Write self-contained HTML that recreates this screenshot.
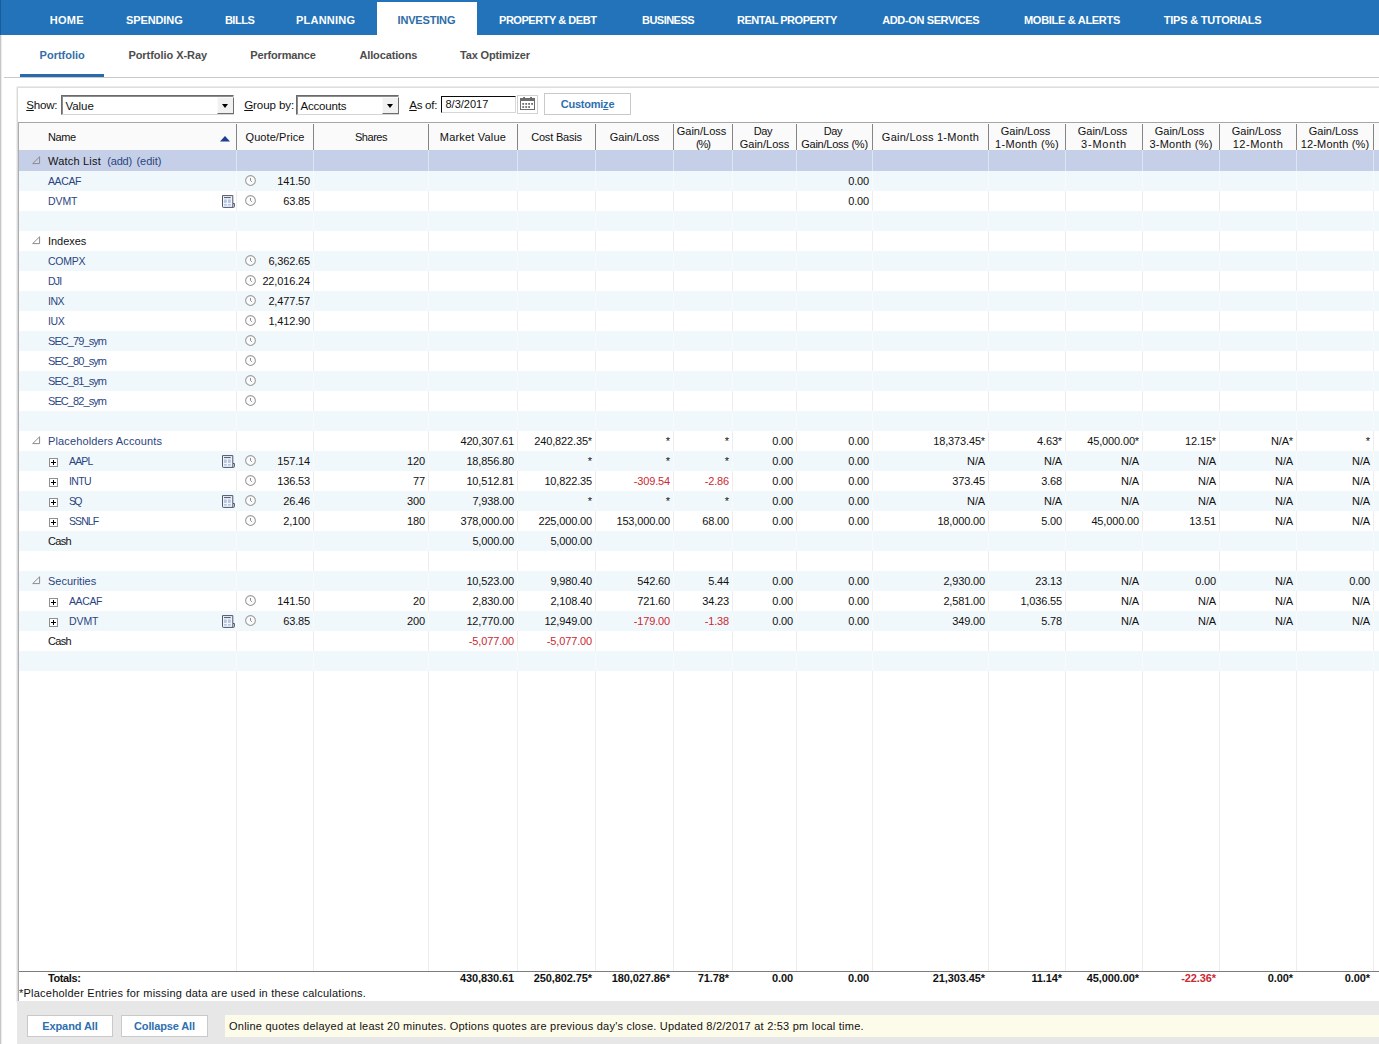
<!DOCTYPE html><html><head><meta charset="utf-8"><title>Portfolio</title><style>
*{box-sizing:border-box;margin:0;padding:0}
html,body{width:1379px;height:1044px;overflow:hidden;background:#fff}
body{position:relative;font-family:"Liberation Sans",sans-serif;font-size:11px;color:#111;letter-spacing:.2px}
.abs{position:absolute}
.nw{white-space:nowrap}
#nav{position:absolute;left:0;top:0;width:1379px;height:35px;background:#2273ba}
#nav .it{position:absolute;top:0;height:35px;line-height:41px;font-weight:bold;font-size:11px;color:#fff;white-space:nowrap;letter-spacing:0}
#nav .act{position:absolute;left:377px;top:2px;width:100px;height:33px;background:#fff}
#ledge{position:absolute;left:0;top:35px;width:2px;height:1009px;background:linear-gradient(90deg,#c6c6c6 50%,#ececec 50%)}
#ledge2{position:absolute;left:0;top:0;width:1px;height:35px;background:#1b5c9c}
.sub{position:absolute;top:47px;height:16px;line-height:16px;font-weight:bold;font-size:11px;color:#4d4d4d;white-space:nowrap;letter-spacing:0}
.sub.on{color:#356ea8}
#uline{position:absolute;left:20px;top:74px;width:84px;height:3px;background:#276aae}
#hline{position:absolute;left:4px;top:77px;width:1375px;height:1px;background:#c9c9c9}
#panel{position:absolute;left:17px;top:87px;width:1362px;height:915px;background:#fff;border-left:1px solid #d9d9d9;border-top:1px solid #dedede;border-bottom:1px solid #cfcfcf;box-shadow:0 -1px 0 #ebebeb,-1px 0 0 #efefef}
#foot{position:absolute;left:17px;top:1001px;width:1362px;height:43px;background:#e7e7e7}
.lbl{position:absolute;top:97.3px;height:16px;line-height:16px;font-size:11.6px;white-space:nowrap;letter-spacing:0;color:#111}
.lbl u{text-decoration:underline}
.sel{position:absolute;top:95px;height:20px;background:#fff;border:1px solid;border-color:#6a6a6a #d4d4d4 #d4d4d4 #6a6a6a;box-shadow:inset 1px 1px 0 #8c8c8c}
.sel .tx{position:absolute;left:3.5px;top:2px;line-height:16px;font-size:11.5px;letter-spacing:0;white-space:nowrap}
.sel .bt{position:absolute;right:-1px;top:1px;width:17px;height:17px;background:#f1f1f1;border:1px solid;border-color:#fafafa #6e6e6e #6e6e6e #fafafa}
.sel .bt:after{content:"";position:absolute;left:4px;top:6px;border:3.5px solid transparent;border-top:4px solid #000;border-bottom:0}
#date{position:absolute;left:441px;top:96px;width:75px;height:17px;background:#fff;border:1px solid;border-color:#0a0a0a #d6d6d6 #d6d6d6 #0a0a0a}
#date span{position:absolute;left:3.5px;top:0;line-height:14px;font-size:11px;letter-spacing:0}
#cal{position:absolute;left:517px;top:95px;width:21px;height:19px;background:#fff;border:1px solid #d2d2d2}
.btn{position:absolute;background:#fff;border:1px solid #c9c9c9;color:#2e6fb0;font-weight:bold;font-size:11px;text-align:center;white-space:nowrap;letter-spacing:0}
#hdr{position:absolute;left:18px;top:122px;width:1361px;height:29px;background:#fafafa;border-top:1px solid #a6a6a6}
.hs{position:absolute;top:124px;width:1px;height:26px;background:#858585}
.hc{position:absolute;top:124px;height:26px;display:flex;align-items:center;justify-content:center;text-align:center;line-height:13px;font-size:11px;color:#111;white-space:nowrap}
.row{position:absolute;left:19px;width:1360px;height:20px;--g:#ededed;background-color:#fff;background-repeat:no-repeat;background-size:1px 100%;background-image:linear-gradient(var(--g),var(--g)),linear-gradient(var(--g),var(--g)),linear-gradient(var(--g),var(--g)),linear-gradient(var(--g),var(--g)),linear-gradient(var(--g),var(--g)),linear-gradient(var(--g),var(--g)),linear-gradient(var(--g),var(--g)),linear-gradient(var(--g),var(--g)),linear-gradient(var(--g),var(--g)),linear-gradient(var(--g),var(--g)),linear-gradient(var(--g),var(--g)),linear-gradient(var(--g),var(--g)),linear-gradient(var(--g),var(--g)),linear-gradient(var(--g),var(--g)),linear-gradient(var(--g),var(--g));background-position:217px 0,294px 0,409px 0,498px 0,576px 0,654px 0,713px 0,777px 0,853px 0,969px 0,1046px 0,1123px 0,1200px 0,1277px 0,1354px 0}
.row.b{background-color:#f1f8fc;--g:#f8fbfd}
.row.s{background-color:#c5d0e8;--g:#dde4f3}
#rest{top:671px;height:300px}
.c{position:absolute;height:20px;line-height:20px;white-space:nowrap;font-size:11px}
.n{letter-spacing:-.15px;text-align:right}
.lk{color:#2b457f}
.red{color:#cb2932}
.bd{font-weight:bold;letter-spacing:-.1px}
#lbord{position:absolute;left:18px;top:122px;width:1px;height:879px;background:#adadad}
#tline{position:absolute;left:18px;top:971px;width:1361px;height:1px;background:#7d7d7d}
#info{position:absolute;left:225px;top:1015px;width:1154px;height:22px;background:#fdfbe9;line-height:22px;padding-left:4px;font-size:11px;white-space:nowrap}
svg{position:absolute;overflow:visible}
</style></head><body>
<div id="nav"><div class="act"></div>
<div class="it" style="left:49.7px;letter-spacing:0.275px">HOME</div>
<div class="it" style="left:125.9px;letter-spacing:-0.084px">SPENDING</div>
<div class="it" style="left:224.9px;letter-spacing:-0.476px">BILLS</div>
<div class="it" style="left:296.0px;letter-spacing:0.231px">PLANNING</div>
<div class="it" style="left:397.5px;letter-spacing:-0.166px;color:#2e6da4">INVESTING</div>
<div class="it" style="left:499.0px;letter-spacing:-0.461px">PROPERTY &amp; DEBT</div>
<div class="it" style="left:642.0px;letter-spacing:-0.531px">BUSINESS</div>
<div class="it" style="left:737.0px;letter-spacing:-0.485px">RENTAL PROPERTY</div>
<div class="it" style="left:882.2px;letter-spacing:-0.366px">ADD-ON SERVICES</div>
<div class="it" style="left:1024.0px;letter-spacing:-0.296px">MOBILE &amp; ALERTS</div>
<div class="it" style="left:1163.8px;letter-spacing:-0.234px">TIPS &amp; TUTORIALS</div>
</div>
<div id="ledge"></div><div id="ledge2"></div>
<div class="sub on" style="left:39.6px;letter-spacing:-0.002px">Portfolio</div>
<div class="sub" style="left:128.4px;letter-spacing:-0.050px">Portfolio X-Ray</div>
<div class="sub" style="left:250.3px;letter-spacing:-0.170px">Performance</div>
<div class="sub" style="left:359.4px;letter-spacing:-0.127px">Allocations</div>
<div class="sub" style="left:459.9px;letter-spacing:-0.141px">Tax Optimizer</div>
<div id="uline"></div><div id="hline"></div>
<div id="panel"></div><div id="foot"></div>
<div class="lbl" style="left:26.3px;letter-spacing:-0.247px"><u>S</u>how:</div>
<div class="sel" style="left:61px;width:173px"><span class="tx"><span style="letter-spacing:-0.066px">Value</span></span><span class="bt"></span></div>
<div class="lbl" style="left:244.2px;letter-spacing:-0.104px"><u>G</u>roup by:</div>
<div class="sel" style="left:296px;width:103px"><span class="tx"><span style="letter-spacing:-0.188px">Accounts</span></span><span class="bt"></span></div>
<div class="lbl" style="left:409.2px;letter-spacing:-0.276px"><u>A</u>s of:</div>
<div id="date"><span>8/3/2017</span></div>
<div id="cal"><svg width="15" height="13" style="left:2px;top:1px" viewBox="0 0 15 13"><rect x="0.5" y="1.5" width="14" height="11" fill="#fff" stroke="#6c6c6c"/><rect x="0" y="1" width="15" height="3" fill="#6c6c6c"/><g fill="#6c6c6c"><rect x="3.1" y="0" width="1.9" height="1.3"/><rect x="10.1" y="0" width="1.9" height="1.3"/><rect x="2.3" y="6" width="1.8" height="1.8"/><rect x="5.3" y="6" width="1.8" height="1.8"/><rect x="8.2" y="6" width="1.8" height="1.8"/><rect x="11.2" y="6" width="1.8" height="1.8"/><rect x="2.3" y="9.1" width="1.8" height="1.8"/><rect x="5.3" y="9.1" width="1.8" height="1.8"/><rect x="8.2" y="9.1" width="1.8" height="1.8"/></g></svg></div>
<div class="btn" style="left:544px;top:93px;width:87px;height:22px;line-height:20px"><span style="letter-spacing:-0.228px">Customi<u>z</u>e</span></div>
<div id="hdr"></div>
<div class="hs" style="left:236px"></div>
<div class="hs" style="left:313px"></div>
<div class="hs" style="left:428px"></div>
<div class="hs" style="left:517px"></div>
<div class="hs" style="left:595px"></div>
<div class="hs" style="left:673px"></div>
<div class="hs" style="left:732px"></div>
<div class="hs" style="left:796px"></div>
<div class="hs" style="left:872px"></div>
<div class="hs" style="left:988px"></div>
<div class="hs" style="left:1065px"></div>
<div class="hs" style="left:1142px"></div>
<div class="hs" style="left:1219px"></div>
<div class="hs" style="left:1296px"></div>
<div class="hs" style="left:1373px"></div>
<div class="hc" style="left:48px;justify-content:flex-start"><div><span style="letter-spacing:-0.381px">Name</span></div></div>
<div class="hc" style="left:237px;width:76px"><div><span style="letter-spacing:0.081px">Quote/Price</span></div></div>
<div class="hc" style="left:314px;width:114px"><div><span style="letter-spacing:-0.472px">Shares</span></div></div>
<div class="hc" style="left:429px;width:88px"><div><span style="letter-spacing:0.191px">Market Value</span></div></div>
<div class="hc" style="left:518px;width:77px"><div><span style="letter-spacing:-0.186px">Cost Basis</span></div></div>
<div class="hc" style="left:596px;width:77px"><div><span style="letter-spacing:-0.004px">Gain/Loss</span></div></div>
<div class="hc" style="left:674px;width:58px"><div><div style="position:relative;top:.8px"><span style="padding-right:3px"><span style="letter-spacing:-0.004px">Gain/Loss</span></span><br><span style="letter-spacing:-1.055px">(%)</span></div></div></div>
<div class="hc" style="left:733px;width:63px"><div><div style="position:relative;top:.8px"><span style="padding-right:3px"><span style="letter-spacing:-0.381px">Day</span></span><br><span style="letter-spacing:-0.004px">Gain/Loss</span></div></div></div>
<div class="hc" style="left:797px;width:75px"><div><div style="position:relative;top:.8px"><span style="padding-right:3px"><span style="letter-spacing:-0.381px">Day</span></span><br><span style="letter-spacing:-0.234px">Gain/Loss (%)</span></div></div></div>
<div class="hc" style="left:873px;width:115px"><div><span style="letter-spacing:0.260px">Gain/Loss 1-Month</span></div></div>
<div class="hc" style="left:989px;width:76px"><div><div style="position:relative;top:.8px"><span style="padding-right:3px"><span style="letter-spacing:-0.004px">Gain/Loss</span></span><br><span style="letter-spacing:0.307px">1-Month (%)</span></div></div></div>
<div class="hc" style="left:1066px;width:76px"><div><div style="position:relative;top:.8px"><span style="padding-right:3px"><span style="letter-spacing:-0.004px">Gain/Loss</span></span><br><span style="letter-spacing:0.807px">3-Month</span></div></div></div>
<div class="hc" style="left:1143px;width:76px"><div><div style="position:relative;top:.8px"><span style="padding-right:3px"><span style="letter-spacing:-0.004px">Gain/Loss</span></span><br><span style="letter-spacing:0.237px">3-Month (%)</span></div></div></div>
<div class="hc" style="left:1220px;width:76px"><div><div style="position:relative;top:.8px"><span style="padding-right:3px"><span style="letter-spacing:-0.004px">Gain/Loss</span></span><br><span style="letter-spacing:0.517px">12-Month</span></div></div></div>
<div class="hc" style="left:1297px;width:76px"><div><div style="position:relative;top:.8px"><span style="padding-right:3px"><span style="letter-spacing:-0.004px">Gain/Loss</span></span><br><span style="letter-spacing:0.169px">12-Month (%)</span></div></div></div>
<svg width="10" height="6" style="left:220px;top:136px" viewBox="0 0 10 6"><path d="M0 5.5 L5 0 L10 5.5Z" fill="#1c3f94"/></svg>
<div class="row s" style="top:150px;height:21px"></div>
<div class="row b" style="top:171px"></div>
<div class="row " style="top:191px"></div>
<div class="row b" style="top:211px"></div>
<div class="row " style="top:231px"></div>
<div class="row b" style="top:251px"></div>
<div class="row " style="top:271px"></div>
<div class="row b" style="top:291px"></div>
<div class="row " style="top:311px"></div>
<div class="row b" style="top:331px"></div>
<div class="row " style="top:351px"></div>
<div class="row b" style="top:371px"></div>
<div class="row " style="top:391px"></div>
<div class="row b" style="top:411px"></div>
<div class="row " style="top:431px"></div>
<div class="row b" style="top:451px"></div>
<div class="row " style="top:471px"></div>
<div class="row b" style="top:491px"></div>
<div class="row " style="top:511px"></div>
<div class="row b" style="top:531px"></div>
<div class="row " style="top:551px"></div>
<div class="row b" style="top:571px"></div>
<div class="row " style="top:591px"></div>
<div class="row b" style="top:611px"></div>
<div class="row " style="top:631px"></div>
<div class="row b" style="top:651px"></div>
<div class="row" id="rest"></div>
<svg width="9" height="9" style="left:32px;top:156px" viewBox="0 0 9 9"><path d="M0.7 7.6 H7.6 V0.8 Z" fill="none" stroke="#8a8a8a" stroke-width="1"/></svg>
<div class="c" style="left:48px;top:151px"><span style="letter-spacing:0.194px">Watch List</span></div><div class="c lk" style="left:107.3px;top:151px"><span style="letter-spacing:-0.222px">(add)</span></div><div class="c lk" style="left:136.4px;top:151px"><span style="letter-spacing:-0.013px">(edit)</span></div>
<div class="c lk" style="left:48px;top:171px"><span style="font-size:10.5px;letter-spacing:-0.404px">AACAF</span></div>
<svg width="11" height="11" style="left:245px;top:175px" viewBox="0 0 11 11"><circle cx="5.5" cy="5.5" r="4.9" fill="#fafafa" fill-opacity=".8" stroke="#9c9c9c" stroke-width="1.05"/><path d="M5.5 3V5.5L6.9 6.8" fill="none" stroke="#7d7d7d" stroke-width="0.9"/></svg>
<div class="c n" style="left:237px;width:73px;top:171px">141.50</div>
<div class="c n" style="left:797px;width:72px;top:171px">0.00</div>
<div class="c lk" style="left:48px;top:191px"><span style="font-size:10.5px;letter-spacing:-0.083px">DVMT</span></div>
<svg width="13" height="13" style="left:222px;top:195px" viewBox="0 0 13 13"><path d="M0.5 0.6H10.8V8.5H12.4V11.6Q12.4 12.4 11.6 12.4H1.3Q0.5 12.4 0.5 11.6Z" fill="#f1f5fb" stroke="#4d556b" stroke-width="1"/><path d="M10.8 8.5V12" stroke="#4d556b" stroke-width="1"/><path d="M2 2.6H8.8" stroke="#4d556b" stroke-width="1"/><rect x="2" y="4.4" width="2.8" height="3.5" fill="#b4c4e3"/><rect x="6" y="4.4" width="2.8" height="3.5" fill="#b4c4e3"/><rect x="2" y="9" width="2.8" height="1.6" fill="#b4c4e3"/><rect x="6" y="9" width="2.8" height="1.6" fill="#b4c4e3"/></svg>
<svg width="11" height="11" style="left:245px;top:195px" viewBox="0 0 11 11"><circle cx="5.5" cy="5.5" r="4.9" fill="#fafafa" fill-opacity=".8" stroke="#9c9c9c" stroke-width="1.05"/><path d="M5.5 3V5.5L6.9 6.8" fill="none" stroke="#7d7d7d" stroke-width="0.9"/></svg>
<div class="c n" style="left:237px;width:73px;top:191px">63.85</div>
<div class="c n" style="left:797px;width:72px;top:191px">0.00</div>
<svg width="9" height="9" style="left:32px;top:236px" viewBox="0 0 9 9"><path d="M0.7 7.6 H7.6 V0.8 Z" fill="none" stroke="#8a8a8a" stroke-width="1"/></svg>
<div class="c" style="left:48px;top:231px"><span style="letter-spacing:-0.055px">Indexes</span></div>
<div class="c lk" style="left:48px;top:251px"><span style="font-size:10.5px;letter-spacing:-0.254px">COMPX</span></div>
<svg width="11" height="11" style="left:245px;top:255px" viewBox="0 0 11 11"><circle cx="5.5" cy="5.5" r="4.9" fill="#fafafa" fill-opacity=".8" stroke="#9c9c9c" stroke-width="1.05"/><path d="M5.5 3V5.5L6.9 6.8" fill="none" stroke="#7d7d7d" stroke-width="0.9"/></svg>
<div class="c n" style="left:237px;width:73px;top:251px">6,362.65</div>
<div class="c lk" style="left:48px;top:271px"><span style="font-size:10.5px;letter-spacing:-0.775px">DJI</span></div>
<svg width="11" height="11" style="left:245px;top:275px" viewBox="0 0 11 11"><circle cx="5.5" cy="5.5" r="4.9" fill="#fafafa" fill-opacity=".8" stroke="#9c9c9c" stroke-width="1.05"/><path d="M5.5 3V5.5L6.9 6.8" fill="none" stroke="#7d7d7d" stroke-width="0.9"/></svg>
<div class="c n" style="left:237px;width:73px;top:271px">22,016.24</div>
<div class="c lk" style="left:48px;top:291px"><span style="font-size:10.5px;letter-spacing:-0.508px">INX</span></div>
<svg width="11" height="11" style="left:245px;top:295px" viewBox="0 0 11 11"><circle cx="5.5" cy="5.5" r="4.9" fill="#fafafa" fill-opacity=".8" stroke="#9c9c9c" stroke-width="1.05"/><path d="M5.5 3V5.5L6.9 6.8" fill="none" stroke="#7d7d7d" stroke-width="0.9"/></svg>
<div class="c n" style="left:237px;width:73px;top:291px">2,477.57</div>
<div class="c lk" style="left:48px;top:311px"><span style="font-size:10.5px;letter-spacing:-0.408px">IUX</span></div>
<svg width="11" height="11" style="left:245px;top:315px" viewBox="0 0 11 11"><circle cx="5.5" cy="5.5" r="4.9" fill="#fafafa" fill-opacity=".8" stroke="#9c9c9c" stroke-width="1.05"/><path d="M5.5 3V5.5L6.9 6.8" fill="none" stroke="#7d7d7d" stroke-width="0.9"/></svg>
<div class="c n" style="left:237px;width:73px;top:311px">1,412.90</div>
<div class="c lk" style="left:48px;top:331px"><span style="letter-spacing:-0.918px">SEC_79_sym</span></div>
<svg width="11" height="11" style="left:245px;top:335px" viewBox="0 0 11 11"><circle cx="5.5" cy="5.5" r="4.9" fill="#fafafa" fill-opacity=".8" stroke="#9c9c9c" stroke-width="1.05"/><path d="M5.5 3V5.5L6.9 6.8" fill="none" stroke="#7d7d7d" stroke-width="0.9"/></svg>
<div class="c lk" style="left:48px;top:351px"><span style="letter-spacing:-0.918px">SEC_80_sym</span></div>
<svg width="11" height="11" style="left:245px;top:355px" viewBox="0 0 11 11"><circle cx="5.5" cy="5.5" r="4.9" fill="#fafafa" fill-opacity=".8" stroke="#9c9c9c" stroke-width="1.05"/><path d="M5.5 3V5.5L6.9 6.8" fill="none" stroke="#7d7d7d" stroke-width="0.9"/></svg>
<div class="c lk" style="left:48px;top:371px"><span style="letter-spacing:-0.918px">SEC_81_sym</span></div>
<svg width="11" height="11" style="left:245px;top:375px" viewBox="0 0 11 11"><circle cx="5.5" cy="5.5" r="4.9" fill="#fafafa" fill-opacity=".8" stroke="#9c9c9c" stroke-width="1.05"/><path d="M5.5 3V5.5L6.9 6.8" fill="none" stroke="#7d7d7d" stroke-width="0.9"/></svg>
<div class="c lk" style="left:48px;top:391px"><span style="letter-spacing:-0.918px">SEC_82_sym</span></div>
<svg width="11" height="11" style="left:245px;top:395px" viewBox="0 0 11 11"><circle cx="5.5" cy="5.5" r="4.9" fill="#fafafa" fill-opacity=".8" stroke="#9c9c9c" stroke-width="1.05"/><path d="M5.5 3V5.5L6.9 6.8" fill="none" stroke="#7d7d7d" stroke-width="0.9"/></svg>
<svg width="9" height="9" style="left:32px;top:436px" viewBox="0 0 9 9"><path d="M0.7 7.6 H7.6 V0.8 Z" fill="none" stroke="#8a8a8a" stroke-width="1"/></svg>
<div class="c lk" style="left:48px;top:431px"><span style="letter-spacing:0.135px">Placeholders Accounts</span></div>
<div class="c n" style="left:429px;width:85px;top:431px">420,307.61</div>
<div class="c n" style="left:518px;width:74px;top:431px">240,822.35*</div>
<div class="c n" style="left:596px;width:74px;top:431px">*</div>
<div class="c n" style="left:674px;width:55px;top:431px">*</div>
<div class="c n" style="left:733px;width:60px;top:431px">0.00</div>
<div class="c n" style="left:797px;width:72px;top:431px">0.00</div>
<div class="c n" style="left:873px;width:112px;top:431px">18,373.45*</div>
<div class="c n" style="left:989px;width:73px;top:431px">4.63*</div>
<div class="c n" style="left:1066px;width:73px;top:431px">45,000.00*</div>
<div class="c n" style="left:1143px;width:73px;top:431px">12.15*</div>
<div class="c n" style="left:1220px;width:73px;top:431px">N/A*</div>
<div class="c n" style="left:1297px;width:73px;top:431px">*</div>
<svg width="9" height="9" style="left:49px;top:458px" viewBox="0 0 9 9"><rect x="0.5" y="0.5" width="8" height="8" fill="#fff" stroke="#8e8e8e"/><path d="M2 4.5H7M4.5 2V7" stroke="#000" stroke-width="1"/></svg>
<div class="c lk" style="left:69px;top:451px"><span style="font-size:10.5px;letter-spacing:-0.820px">AAPL</span></div>
<svg width="13" height="13" style="left:222px;top:455px" viewBox="0 0 13 13"><path d="M0.5 0.6H10.8V8.5H12.4V11.6Q12.4 12.4 11.6 12.4H1.3Q0.5 12.4 0.5 11.6Z" fill="#f1f5fb" stroke="#4d556b" stroke-width="1"/><path d="M10.8 8.5V12" stroke="#4d556b" stroke-width="1"/><path d="M2 2.6H8.8" stroke="#4d556b" stroke-width="1"/><rect x="2" y="4.4" width="2.8" height="3.5" fill="#b4c4e3"/><rect x="6" y="4.4" width="2.8" height="3.5" fill="#b4c4e3"/><rect x="2" y="9" width="2.8" height="1.6" fill="#b4c4e3"/><rect x="6" y="9" width="2.8" height="1.6" fill="#b4c4e3"/></svg>
<svg width="11" height="11" style="left:245px;top:455px" viewBox="0 0 11 11"><circle cx="5.5" cy="5.5" r="4.9" fill="#fafafa" fill-opacity=".8" stroke="#9c9c9c" stroke-width="1.05"/><path d="M5.5 3V5.5L6.9 6.8" fill="none" stroke="#7d7d7d" stroke-width="0.9"/></svg>
<div class="c n" style="left:237px;width:73px;top:451px">157.14</div>
<div class="c n" style="left:314px;width:111px;top:451px">120</div>
<div class="c n" style="left:429px;width:85px;top:451px">18,856.80</div>
<div class="c n" style="left:518px;width:74px;top:451px">*</div>
<div class="c n" style="left:596px;width:74px;top:451px">*</div>
<div class="c n" style="left:674px;width:55px;top:451px">*</div>
<div class="c n" style="left:733px;width:60px;top:451px">0.00</div>
<div class="c n" style="left:797px;width:72px;top:451px">0.00</div>
<div class="c n" style="left:873px;width:112px;top:451px">N/A</div>
<div class="c n" style="left:989px;width:73px;top:451px">N/A</div>
<div class="c n" style="left:1066px;width:73px;top:451px">N/A</div>
<div class="c n" style="left:1143px;width:73px;top:451px">N/A</div>
<div class="c n" style="left:1220px;width:73px;top:451px">N/A</div>
<div class="c n" style="left:1297px;width:73px;top:451px">N/A</div>
<svg width="9" height="9" style="left:49px;top:478px" viewBox="0 0 9 9"><rect x="0.5" y="0.5" width="8" height="8" fill="#fff" stroke="#8e8e8e"/><path d="M2 4.5H7M4.5 2V7" stroke="#000" stroke-width="1"/></svg>
<div class="c lk" style="left:69px;top:471px"><span style="font-size:10.5px;letter-spacing:-0.633px">INTU</span></div>
<svg width="11" height="11" style="left:245px;top:475px" viewBox="0 0 11 11"><circle cx="5.5" cy="5.5" r="4.9" fill="#fafafa" fill-opacity=".8" stroke="#9c9c9c" stroke-width="1.05"/><path d="M5.5 3V5.5L6.9 6.8" fill="none" stroke="#7d7d7d" stroke-width="0.9"/></svg>
<div class="c n" style="left:237px;width:73px;top:471px">136.53</div>
<div class="c n" style="left:314px;width:111px;top:471px">77</div>
<div class="c n" style="left:429px;width:85px;top:471px">10,512.81</div>
<div class="c n" style="left:518px;width:74px;top:471px">10,822.35</div>
<div class="c n red" style="left:596px;width:74px;top:471px">-309.54</div>
<div class="c n red" style="left:674px;width:55px;top:471px">-2.86</div>
<div class="c n" style="left:733px;width:60px;top:471px">0.00</div>
<div class="c n" style="left:797px;width:72px;top:471px">0.00</div>
<div class="c n" style="left:873px;width:112px;top:471px">373.45</div>
<div class="c n" style="left:989px;width:73px;top:471px">3.68</div>
<div class="c n" style="left:1066px;width:73px;top:471px">N/A</div>
<div class="c n" style="left:1143px;width:73px;top:471px">N/A</div>
<div class="c n" style="left:1220px;width:73px;top:471px">N/A</div>
<div class="c n" style="left:1297px;width:73px;top:471px">N/A</div>
<svg width="9" height="9" style="left:49px;top:498px" viewBox="0 0 9 9"><rect x="0.5" y="0.5" width="8" height="8" fill="#fff" stroke="#8e8e8e"/><path d="M2 4.5H7M4.5 2V7" stroke="#000" stroke-width="1"/></svg>
<div class="c lk" style="left:69px;top:491px"><span style="font-size:10.5px;letter-spacing:-1.672px">SQ</span></div>
<svg width="13" height="13" style="left:222px;top:495px" viewBox="0 0 13 13"><path d="M0.5 0.6H10.8V8.5H12.4V11.6Q12.4 12.4 11.6 12.4H1.3Q0.5 12.4 0.5 11.6Z" fill="#f1f5fb" stroke="#4d556b" stroke-width="1"/><path d="M10.8 8.5V12" stroke="#4d556b" stroke-width="1"/><path d="M2 2.6H8.8" stroke="#4d556b" stroke-width="1"/><rect x="2" y="4.4" width="2.8" height="3.5" fill="#b4c4e3"/><rect x="6" y="4.4" width="2.8" height="3.5" fill="#b4c4e3"/><rect x="2" y="9" width="2.8" height="1.6" fill="#b4c4e3"/><rect x="6" y="9" width="2.8" height="1.6" fill="#b4c4e3"/></svg>
<svg width="11" height="11" style="left:245px;top:495px" viewBox="0 0 11 11"><circle cx="5.5" cy="5.5" r="4.9" fill="#fafafa" fill-opacity=".8" stroke="#9c9c9c" stroke-width="1.05"/><path d="M5.5 3V5.5L6.9 6.8" fill="none" stroke="#7d7d7d" stroke-width="0.9"/></svg>
<div class="c n" style="left:237px;width:73px;top:491px">26.46</div>
<div class="c n" style="left:314px;width:111px;top:491px">300</div>
<div class="c n" style="left:429px;width:85px;top:491px">7,938.00</div>
<div class="c n" style="left:518px;width:74px;top:491px">*</div>
<div class="c n" style="left:596px;width:74px;top:491px">*</div>
<div class="c n" style="left:674px;width:55px;top:491px">*</div>
<div class="c n" style="left:733px;width:60px;top:491px">0.00</div>
<div class="c n" style="left:797px;width:72px;top:491px">0.00</div>
<div class="c n" style="left:873px;width:112px;top:491px">N/A</div>
<div class="c n" style="left:989px;width:73px;top:491px">N/A</div>
<div class="c n" style="left:1066px;width:73px;top:491px">N/A</div>
<div class="c n" style="left:1143px;width:73px;top:491px">N/A</div>
<div class="c n" style="left:1220px;width:73px;top:491px">N/A</div>
<div class="c n" style="left:1297px;width:73px;top:491px">N/A</div>
<svg width="9" height="9" style="left:49px;top:518px" viewBox="0 0 9 9"><rect x="0.5" y="0.5" width="8" height="8" fill="#fff" stroke="#8e8e8e"/><path d="M2 4.5H7M4.5 2V7" stroke="#000" stroke-width="1"/></svg>
<div class="c lk" style="left:69px;top:511px"><span style="font-size:10.5px;letter-spacing:-0.911px">SSNLF</span></div>
<svg width="11" height="11" style="left:245px;top:515px" viewBox="0 0 11 11"><circle cx="5.5" cy="5.5" r="4.9" fill="#fafafa" fill-opacity=".8" stroke="#9c9c9c" stroke-width="1.05"/><path d="M5.5 3V5.5L6.9 6.8" fill="none" stroke="#7d7d7d" stroke-width="0.9"/></svg>
<div class="c n" style="left:237px;width:73px;top:511px">2,100</div>
<div class="c n" style="left:314px;width:111px;top:511px">180</div>
<div class="c n" style="left:429px;width:85px;top:511px">378,000.00</div>
<div class="c n" style="left:518px;width:74px;top:511px">225,000.00</div>
<div class="c n" style="left:596px;width:74px;top:511px">153,000.00</div>
<div class="c n" style="left:674px;width:55px;top:511px">68.00</div>
<div class="c n" style="left:733px;width:60px;top:511px">0.00</div>
<div class="c n" style="left:797px;width:72px;top:511px">0.00</div>
<div class="c n" style="left:873px;width:112px;top:511px">18,000.00</div>
<div class="c n" style="left:989px;width:73px;top:511px">5.00</div>
<div class="c n" style="left:1066px;width:73px;top:511px">45,000.00</div>
<div class="c n" style="left:1143px;width:73px;top:511px">13.51</div>
<div class="c n" style="left:1220px;width:73px;top:511px">N/A</div>
<div class="c n" style="left:1297px;width:73px;top:511px">N/A</div>
<div class="c" style="left:48px;top:531px"><span style="letter-spacing:-0.663px">Cash</span></div>
<div class="c n" style="left:429px;width:85px;top:531px">5,000.00</div>
<div class="c n" style="left:518px;width:74px;top:531px">5,000.00</div>
<svg width="9" height="9" style="left:32px;top:576px" viewBox="0 0 9 9"><path d="M0.7 7.6 H7.6 V0.8 Z" fill="none" stroke="#8a8a8a" stroke-width="1"/></svg>
<div class="c lk" style="left:48px;top:571px"><span style="letter-spacing:-0.011px">Securities</span></div>
<div class="c n" style="left:429px;width:85px;top:571px">10,523.00</div>
<div class="c n" style="left:518px;width:74px;top:571px">9,980.40</div>
<div class="c n" style="left:596px;width:74px;top:571px">542.60</div>
<div class="c n" style="left:674px;width:55px;top:571px">5.44</div>
<div class="c n" style="left:733px;width:60px;top:571px">0.00</div>
<div class="c n" style="left:797px;width:72px;top:571px">0.00</div>
<div class="c n" style="left:873px;width:112px;top:571px">2,930.00</div>
<div class="c n" style="left:989px;width:73px;top:571px">23.13</div>
<div class="c n" style="left:1066px;width:73px;top:571px">N/A</div>
<div class="c n" style="left:1143px;width:73px;top:571px">0.00</div>
<div class="c n" style="left:1220px;width:73px;top:571px">N/A</div>
<div class="c n" style="left:1297px;width:73px;top:571px">0.00</div>
<svg width="9" height="9" style="left:49px;top:598px" viewBox="0 0 9 9"><rect x="0.5" y="0.5" width="8" height="8" fill="#fff" stroke="#8e8e8e"/><path d="M2 4.5H7M4.5 2V7" stroke="#000" stroke-width="1"/></svg>
<div class="c lk" style="left:69px;top:591px"><span style="font-size:10.5px;letter-spacing:-0.404px">AACAF</span></div>
<svg width="11" height="11" style="left:245px;top:595px" viewBox="0 0 11 11"><circle cx="5.5" cy="5.5" r="4.9" fill="#fafafa" fill-opacity=".8" stroke="#9c9c9c" stroke-width="1.05"/><path d="M5.5 3V5.5L6.9 6.8" fill="none" stroke="#7d7d7d" stroke-width="0.9"/></svg>
<div class="c n" style="left:237px;width:73px;top:591px">141.50</div>
<div class="c n" style="left:314px;width:111px;top:591px">20</div>
<div class="c n" style="left:429px;width:85px;top:591px">2,830.00</div>
<div class="c n" style="left:518px;width:74px;top:591px">2,108.40</div>
<div class="c n" style="left:596px;width:74px;top:591px">721.60</div>
<div class="c n" style="left:674px;width:55px;top:591px">34.23</div>
<div class="c n" style="left:733px;width:60px;top:591px">0.00</div>
<div class="c n" style="left:797px;width:72px;top:591px">0.00</div>
<div class="c n" style="left:873px;width:112px;top:591px">2,581.00</div>
<div class="c n" style="left:989px;width:73px;top:591px">1,036.55</div>
<div class="c n" style="left:1066px;width:73px;top:591px">N/A</div>
<div class="c n" style="left:1143px;width:73px;top:591px">N/A</div>
<div class="c n" style="left:1220px;width:73px;top:591px">N/A</div>
<div class="c n" style="left:1297px;width:73px;top:591px">N/A</div>
<svg width="9" height="9" style="left:49px;top:618px" viewBox="0 0 9 9"><rect x="0.5" y="0.5" width="8" height="8" fill="#fff" stroke="#8e8e8e"/><path d="M2 4.5H7M4.5 2V7" stroke="#000" stroke-width="1"/></svg>
<div class="c lk" style="left:69px;top:611px"><span style="font-size:10.5px;letter-spacing:-0.083px">DVMT</span></div>
<svg width="13" height="13" style="left:222px;top:615px" viewBox="0 0 13 13"><path d="M0.5 0.6H10.8V8.5H12.4V11.6Q12.4 12.4 11.6 12.4H1.3Q0.5 12.4 0.5 11.6Z" fill="#f1f5fb" stroke="#4d556b" stroke-width="1"/><path d="M10.8 8.5V12" stroke="#4d556b" stroke-width="1"/><path d="M2 2.6H8.8" stroke="#4d556b" stroke-width="1"/><rect x="2" y="4.4" width="2.8" height="3.5" fill="#b4c4e3"/><rect x="6" y="4.4" width="2.8" height="3.5" fill="#b4c4e3"/><rect x="2" y="9" width="2.8" height="1.6" fill="#b4c4e3"/><rect x="6" y="9" width="2.8" height="1.6" fill="#b4c4e3"/></svg>
<svg width="11" height="11" style="left:245px;top:615px" viewBox="0 0 11 11"><circle cx="5.5" cy="5.5" r="4.9" fill="#fafafa" fill-opacity=".8" stroke="#9c9c9c" stroke-width="1.05"/><path d="M5.5 3V5.5L6.9 6.8" fill="none" stroke="#7d7d7d" stroke-width="0.9"/></svg>
<div class="c n" style="left:237px;width:73px;top:611px">63.85</div>
<div class="c n" style="left:314px;width:111px;top:611px">200</div>
<div class="c n" style="left:429px;width:85px;top:611px">12,770.00</div>
<div class="c n" style="left:518px;width:74px;top:611px">12,949.00</div>
<div class="c n red" style="left:596px;width:74px;top:611px">-179.00</div>
<div class="c n red" style="left:674px;width:55px;top:611px">-1.38</div>
<div class="c n" style="left:733px;width:60px;top:611px">0.00</div>
<div class="c n" style="left:797px;width:72px;top:611px">0.00</div>
<div class="c n" style="left:873px;width:112px;top:611px">349.00</div>
<div class="c n" style="left:989px;width:73px;top:611px">5.78</div>
<div class="c n" style="left:1066px;width:73px;top:611px">N/A</div>
<div class="c n" style="left:1143px;width:73px;top:611px">N/A</div>
<div class="c n" style="left:1220px;width:73px;top:611px">N/A</div>
<div class="c n" style="left:1297px;width:73px;top:611px">N/A</div>
<div class="c" style="left:48px;top:631px"><span style="letter-spacing:-0.663px">Cash</span></div>
<div class="c n red" style="left:429px;width:85px;top:631px">-5,077.00</div>
<div class="c n red" style="left:518px;width:74px;top:631px">-5,077.00</div>
<div id="tline"></div><div id="lbord"></div>
<div class="c bd" style="left:48px;top:968px"><span style="letter-spacing:-0.408px">Totals:</span></div>
<div class="c n bd" style="left:429px;width:85px;top:968px">430,830.61</div>
<div class="c n bd" style="left:518px;width:74px;top:968px">250,802.75*</div>
<div class="c n bd" style="left:596px;width:74px;top:968px">180,027.86*</div>
<div class="c n bd" style="left:674px;width:55px;top:968px">71.78*</div>
<div class="c n bd" style="left:733px;width:60px;top:968px">0.00</div>
<div class="c n bd" style="left:797px;width:72px;top:968px">0.00</div>
<div class="c n bd" style="left:873px;width:112px;top:968px">21,303.45*</div>
<div class="c n bd" style="left:989px;width:73px;top:968px">11.14*</div>
<div class="c n bd" style="left:1066px;width:73px;top:968px">45,000.00*</div>
<div class="c n bd red" style="left:1143px;width:73px;top:968px">-22.36*</div>
<div class="c n bd" style="left:1220px;width:73px;top:968px">0.00*</div>
<div class="c n bd" style="left:1297px;width:73px;top:968px">0.00*</div>
<div class="c" style="left:19px;top:983px"><span style="letter-spacing:0.226px">*Placeholder Entries for missing data are used in these calculations.</span></div>
<div class="btn" style="left:27px;top:1015px;width:86px;height:22px;line-height:20px"><span style="letter-spacing:-0.082px">Expand All</span></div>
<div class="btn" style="left:121px;top:1015px;width:87px;height:22px;line-height:20px"><span style="letter-spacing:-0.142px">Collapse All</span></div>
<div id="info"><span style="letter-spacing:0.227px">Online quotes delayed at least 20 minutes. Options quotes are previous day's close. Updated 8/2/2017 at 2:53 pm local time.</span></div>
</body></html>
